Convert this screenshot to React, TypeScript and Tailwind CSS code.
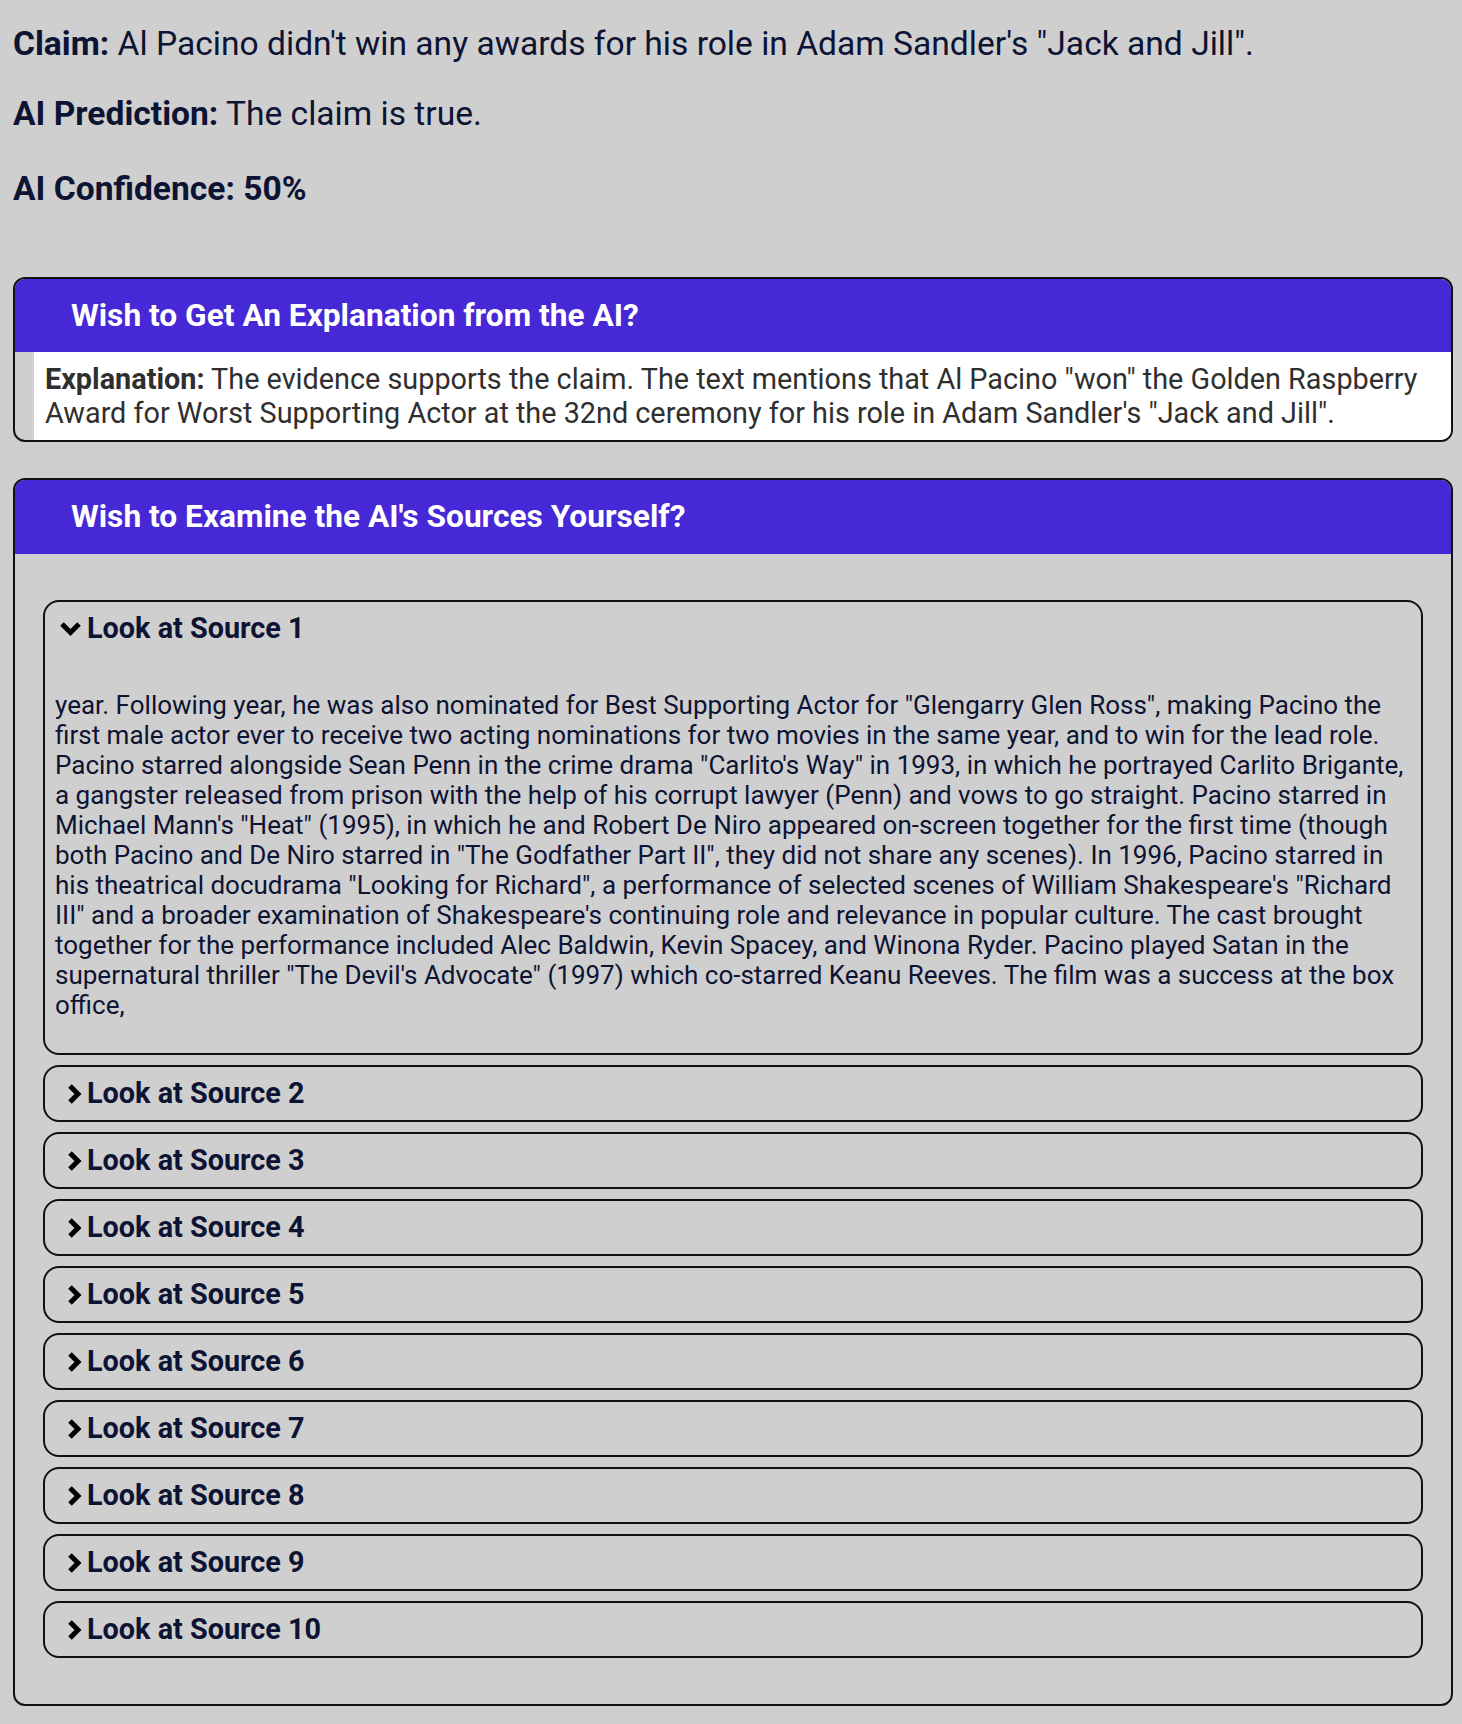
import { FC } from "react";

const SOURCES = [1, 2, 3, 4, 5, 6, 7, 8, 9, 10];

const SOURCE_ONE =
  'year. Following year, he was also nominated for Best Supporting Actor for "Glengarry Glen Ross", making Pacino the first male actor ever to receive two acting nominations for two movies in the same year, and to win for the lead role. Pacino starred alongside Sean Penn in the crime drama "Carlito\'s Way" in 1993, in which he portrayed Carlito Brigante, a gangster released from prison with the help of his corrupt lawyer (Penn) and vows to go straight. Pacino starred in Michael Mann\'s "Heat" (1995), in which he and Robert De Niro appeared on-screen together for the first time (though both Pacino and De Niro starred in "The Godfather Part II", they did not share any scenes). In 1996, Pacino starred in his theatrical docudrama "Looking for Richard", a performance of selected scenes of William Shakespeare\'s "Richard III" and a broader examination of Shakespeare\'s continuing role and relevance in popular culture. The cast brought together for the performance included Alec Baldwin, Kevin Spacey, and Winona Ryder. Pacino played Satan in the supernatural thriller "The Devil\'s Advocate" (1997) which co-starred Keanu Reeves. The film was a success at the box office,';

const Chevron: FC<{ open: boolean }> = ({ open }) =>
  open ? (
    <svg width="23" height="17" viewBox="0 0 23 17">
      <polyline points="3,4 11.5,12.5 20,4" fill="none" stroke="#000" strokeWidth="5" />
    </svg>
  ) : (
    <svg width="15" height="20" viewBox="0 0 15 20">
      <polyline points="3,2 11,10 3,18" fill="none" stroke="#000" strokeWidth="5" />
    </svg>
  );

const SourceItem: FC<{ n: number; open?: boolean }> = ({ n, open = false }) => (
  <div className="rounded-[16px] border-2 border-[#111]">
    <div className="flex h-[53px] items-center pl-[14px]">
      <span className="flex w-[23px] justify-end">
        <Chevron open={open} />
      </span>
      <span className="ml-[5px] text-[28.8px] font-bold text-[#0d1333]">Look at Source {n}</span>
    </div>
    {open && (
      <p className="px-[10px] pb-[33px] pt-[35px] text-[26px] leading-[30px] text-[#0d1333]">
        {SOURCE_ONE}
      </p>
    )}
  </div>
);

const App: FC = () => {
  return (
    <div className="min-h-screen bg-[#cfcfcf] pb-[18px] pt-[24px] font-['Roboto',sans-serif] text-[#0d1333]">
      <div className="px-[13px]">
        <p className="text-[33.6px] leading-[40px]">
          <span className="font-bold">Claim:</span> Al Pacino didn't win any awards for his role in Adam
          Sandler's "Jack and Jill".
        </p>
        <p className="mt-[30px] text-[33.6px] leading-[40px]">
          <span className="font-bold">AI Prediction:</span> The claim is true.
        </p>
        <p className="mt-[35px] text-[33.6px] font-bold leading-[40px]">AI Confidence: 50%</p>
      </div>

      <div className="ml-[13px] mr-[9px] mt-[68px] overflow-hidden rounded-xl border-2 border-[#111]">
        <div className="flex h-[73px] items-center bg-[#4628d6] pl-[56px] text-[31.7px] font-bold text-white">
          Wish to Get An Explanation from the AI?
        </div>
        <p className="-mr-[2px] ml-[19px] bg-white px-[11px] py-[10px] text-[28.8px] leading-[34px] text-[#2f2f2f]">
          <b>Explanation:</b> The evidence supports the claim. The text mentions that Al Pacino "won" the
          Golden Raspberry Award for Worst Supporting Actor at the 32nd ceremony for his role in Adam
          Sandler's "Jack and Jill".
        </p>
      </div>

      <div className="ml-[13px] mr-[9px] mt-[36px] overflow-hidden rounded-xl border-2 border-[#111]">
        <div className="flex h-[74px] items-center bg-[#4628d6] pl-[56px] text-[31.7px] font-bold text-white">
          Wish to Examine the AI's Sources Yourself?
        </div>
        <div className="flex flex-col gap-[10px] px-[28px] pb-[46px] pt-[46px]">
          {SOURCES.map((n) => (
            <SourceItem key={n} n={n} open={n === 1} />
          ))}
        </div>
      </div>
    </div>
  );
};

export default App;
